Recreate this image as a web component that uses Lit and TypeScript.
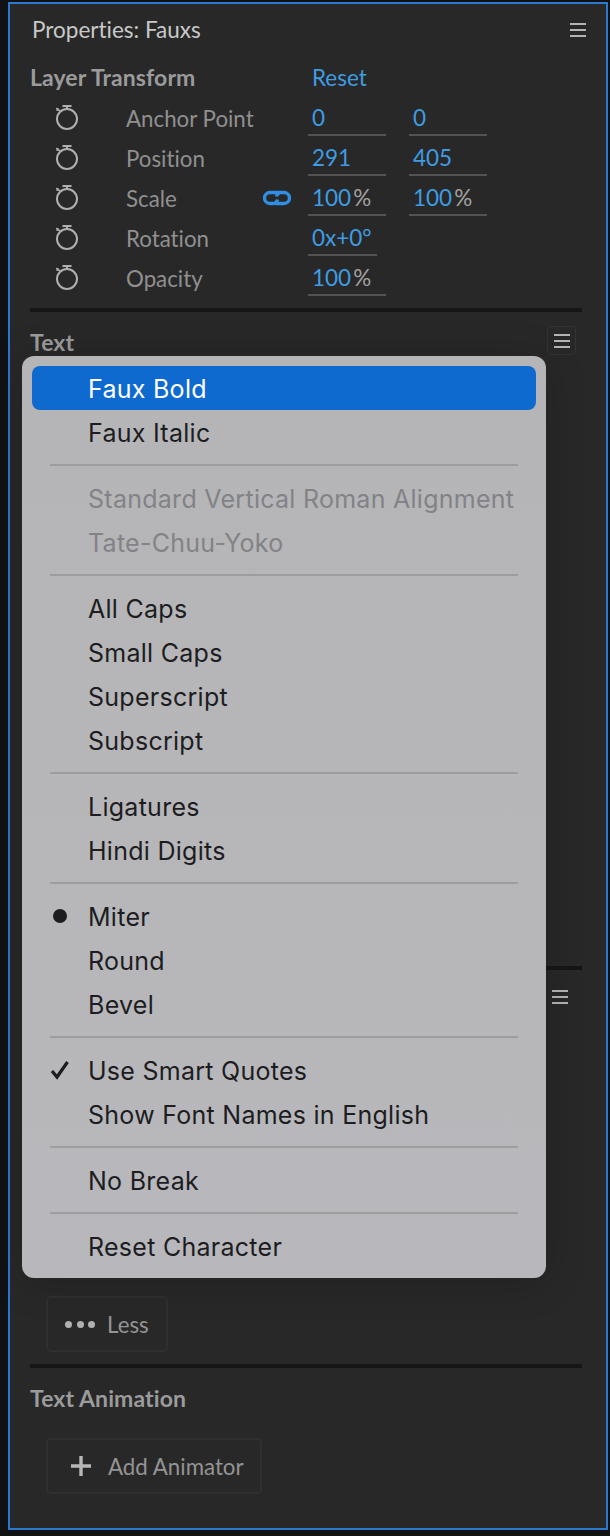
import { LitElement, html, css } from "lit";
import { customElement } from "lit/decorators.js";

const burger = html`<svg class="burger" width="16" height="14" viewBox="0 0 16 14"><path d="M0 1h16M0 7h16M0 13h16" stroke="#b4b4b4" stroke-width="2" fill="none"/></svg>`;
const watch = html`<svg class="watch" width="26" height="28" viewBox="0 0 26 28" fill="none" stroke="#b0b0b0" stroke-width="2"><circle cx="12" cy="16" r="10"/><path d="M7.500 3h9M12 3v3" /><path d="M3.500 5.500l-1.800 2.200M1.200 5.200l4 3" stroke-width="1.600"/></svg>`;

type MenuEntry = { t?: string; k?: string };
const menu: MenuEntry[] = [
  { t: "Faux Bold", k: "hl" }, { t: "Faux Italic" }, {},
  { t: "Standard Vertical Roman Alignment", k: "dis" }, { t: "Tate-Chuu-Yoko", k: "dis" }, {},
  { t: "All Caps" }, { t: "Small Caps" }, { t: "Superscript" }, { t: "Subscript" }, {},
  { t: "Ligatures" }, { t: "Hindi Digits" }, {},
  { t: "Miter", k: "radio" }, { t: "Round" }, { t: "Bevel" }, {},
  { t: "Use Smart Quotes", k: "checked" }, { t: "Show Font Names in English" }, {},
  { t: "No Break" }, {},
  { t: "Reset Character" },
];

@customElement("app-root")
export class AppRoot extends LitElement {
  static styles = css`
    :host { display: block; position: relative; width: 610px; height: 1536px; background: #111213; overflow: hidden; font-family: "Lato", "Noto Sans", sans-serif; font-variant-ligatures: none; }
    .frame { padding: 2px 2px 6px 8px; height: 100%; box-sizing: border-box; }
    .panel { height: 100%; box-sizing: border-box; border: 2px solid #2b78cf; background: #282828; padding: 0 24px 0 20px; display: flex; flex-direction: column; }
    .panel > * { flex: none; }
    .title { box-sizing: border-box; display: flex; justify-content: space-between; align-items: center; height: 52px; padding: 0 0 1px 2px; color: #c9c9c9; font-size: 22.5px; }
    .title .burger { margin-right: -4px; margin-top: 1px; }
    .head { font-weight: 700; color: #9b9b9b; font-size: 23px; letter-spacing: .1px; }
    .lt { display: grid; grid-template-columns: 278px auto; align-items: center; height: 26px; margin-top: 7px; }
    .reset { color: #3f9ce2; font-size: 22.5px; padding-left: 4px; }
    .rows { margin-top: 9px; display: flex; flex-direction: column; }
    .row { display: grid; grid-template-columns: 26px 45px 182px 78px 23px 78px; padding-left: 25px; height: 40px; align-items: center; color: #909090; font-size: 22.5px; }
    .watch { margin-top: -2px; }
    .lab { grid-column: 3; display: flex; justify-content: space-between; align-items: center; padding: 0 17px 0 0; font-size: 22.3px; white-space: nowrap; }
    .val { box-sizing: border-box; align-self: start; height: 38px; padding-left: 4px; border-bottom: 2px solid #535353; color: #3f9ce2; line-height: 40px; }
    .val.short { width: 69px; }
    .val.second { grid-column: 6; }
    .val span { color: #a0a0a0; margin-left: 2px; }
    .rule { height: 4px; background: #161616; }
    .rule.first { margin-top: 10px; }
    .sec { display: flex; justify-content: space-between; align-items: center; height: 29px; margin-top: 14px; }
    .sec .head { padding-top: 3px; }
    .bbtn { width: 29px; height: 29px; box-sizing: border-box; border: 1px solid #333; border-radius: 4px; display: flex; align-items: center; justify-content: center; margin-right: 6px; }
    .gap1 { height: 611px; }
    .gap2 { height: 292px; }
    .plain { display: flex; justify-content: flex-end; padding: 20px 14px 0 0; }
    .btn { display: inline-flex; align-items: center; box-sizing: border-box; height: 56px; border: 2px solid #303030; border-radius: 5px; color: #949494; font-size: 22.3px; }
    .less { margin-left: 16px; width: 122px; padding-left: 17px; gap: 12px; margin-bottom: 12px; }
    .dots { display: flex; gap: 4.500px; }
    .dots i { width: 7px; height: 7px; background: #b0b0b0; border-radius: 50%; }
    .ta { margin-top: 17px; height: 26px; line-height: 26px; }
    .add { margin-left: 16px; margin-top: 27px; width: 216px; padding-left: 23px; gap: 17px; }
    .menu { position: absolute; left: 22px; top: 356px; width: 524px; height: 922px; box-sizing: border-box; padding: 10px; border-radius: 12px; background: linear-gradient(#b5b5b7, #b8b8bc); box-shadow: 0 4px 40px rgba(0,0,0,.18); font-family: "Inter", "Roboto", sans-serif; font-size: 25px; color: #1d1d1f; letter-spacing: .27px; }
    .item { height: 44px; box-sizing: border-box; padding: 2px 0 0 56px; border-radius: 8px; display: flex; align-items: center; position: relative; white-space: nowrap; }
    .item.hl { background: #0f6ad0; color: #fff; }
    .item.dis { color: #828287; }
    .sep { height: 22px; display: flex; align-items: center; padding: 0 18px; }
    .sep::after { content: ""; flex: 1; height: 2px; background: #9d9d9f; }
    .mark { position: absolute; }
    .radio-dot { left: 21px; top: 15px; width: 14px; height: 14px; border-radius: 50%; background: #1d1d1f; }
    .check { left: 18px; top: 12px; }
  `;

  row(label: string, a: unknown, b?: unknown, link = false, short = false) {
    return html`<div class="row">
      ${watch}
      <div class="lab"><span>${label}</span>${link
        ? html`<svg width="28" height="16" viewBox="0 0 28 16" fill="none" stroke="#2f8fe6" stroke-width="3.400"><path d="M16 2.500H7a5.500 5.500 0 0 0 0 11H10.500c2.500 0 3.500-1.500 4-4"/><path d="M12 13.500h9a5.500 5.500 0 0 0 0-11H17.500c-2.500 0-3.500 1.500-4 4"/></svg>`
        : ""}</div>
      <div class="val ${short ? "short" : ""}">${a}</div>
      ${b !== undefined ? html`<div class="val second">${b}</div>` : ""}
    </div>`;
  }

  render() {
    const pct = html`100<span>%</span>`;
    return html`
      <div class="frame"><div class="panel">
        <div class="title"><span>Properties: Fauxs</span>${burger}</div>
        <div class="lt"><span class="head">Layer Transform</span><span class="reset">Reset</span></div>
        <div class="rows">
          ${this.row("Anchor Point", "0", "0")}
          ${this.row("Position", "291", "405")}
          ${this.row("Scale", pct, pct, true)}
          ${this.row("Rotation", "0x+0°", undefined, false, true)}
          ${this.row("Opacity", pct)}
        </div>
        <div class="rule first"></div>
        <div class="sec"><span class="head">Text</span><div class="bbtn">${burger}</div></div>
        <div class="gap1"></div>
        <div class="rule"></div>
        <div class="plain">${burger}</div>
        <div class="gap2"></div>
        <div class="btn less"><span class="dots"><i></i><i></i><i></i></span>Less</div>
        <div class="rule"></div>
        <div class="head ta">Text Animation</div>
        <div class="btn add"><svg width="20" height="20" viewBox="0 0 20 20"><path d="M10 0v20M0 10h20" stroke="#b8b8b8" stroke-width="3.400"/></svg>Add Animator</div>
      </div></div>
      <div class="menu">
        ${menu.map((m) => m.t
          ? html`<div class="item ${m.k ?? ""}">
              ${m.k === "radio" ? html`<span class="mark radio-dot"></span>` : ""}
              ${m.k === "checked" ? html`<svg class="mark check" width="20" height="20" viewBox="0 0 20 20" fill="none" stroke="#1d1d1f" stroke-width="3.200"><path d="M2 11l5 6L17.500 2"/></svg>` : ""}
              <span>${m.t}</span></div>`
          : html`<div class="sep"></div>`)}
      </div>
    `;
  }
}
